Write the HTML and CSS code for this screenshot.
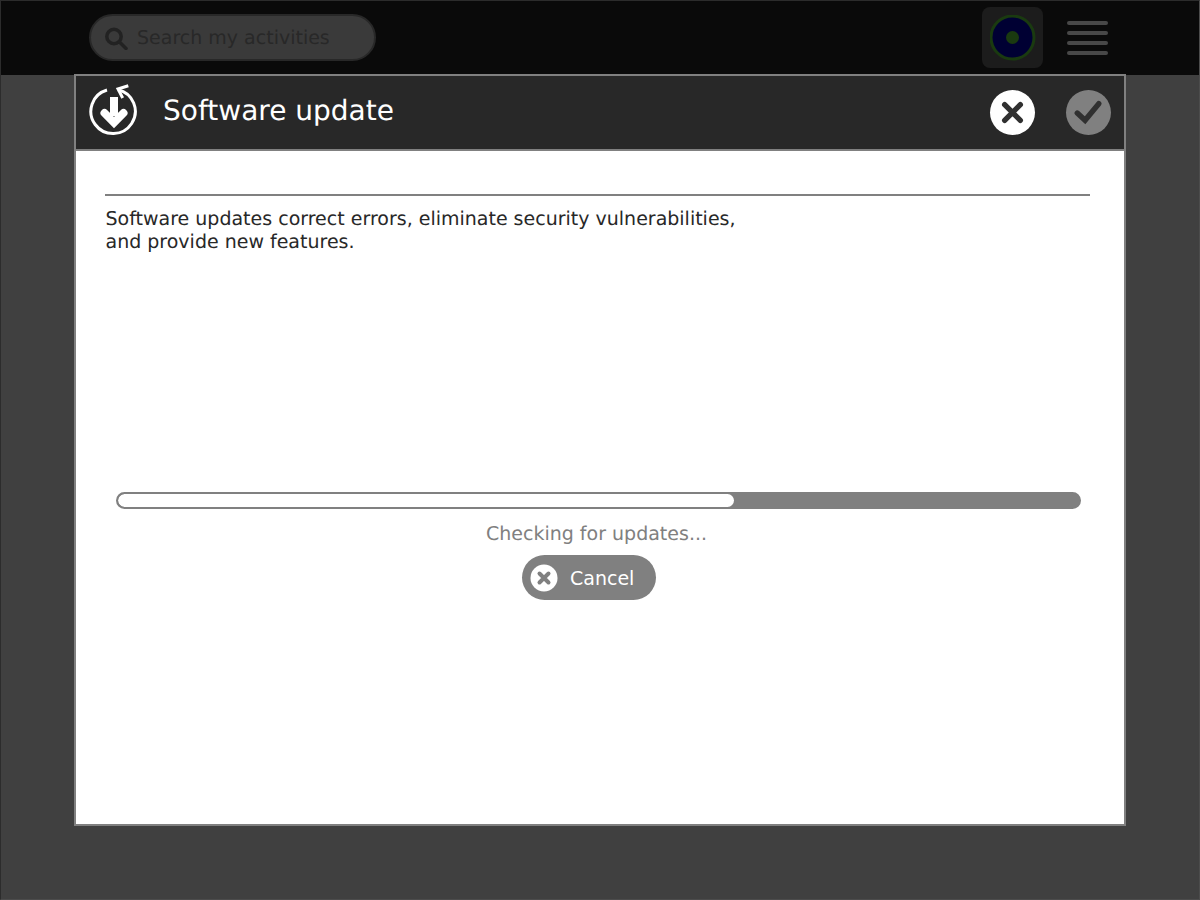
FILE: index.html
```html
<!DOCTYPE html>
<html lang="en">
<head>
<meta charset="utf-8">
<title>Software update</title>
<link rel="stylesheet" href="styles.css">
</head>
<body>
<div class="desktop">
  <header class="toolbar">
    <div class="search">
      <svg class="search-icon" viewBox="0 0 24 24" width="24" height="24"><circle cx="9" cy="10.500" r="7.200"/><path d="M14.500 16 21 22.500"/></svg>
      <span class="search-text">Search my activities</span>
    </div>
    <div class="toolbar-right">
      <div class="buddy">
        <svg viewBox="0 0 46 46" width="46" height="46"><circle class="buddy-ring" cx="22.500" cy="22.500" r="21.5"/><circle class="buddy-dot" cx="22.500" cy="22.500" r="6.5"/></svg>
      </div>
      <div class="menu"><span></span><span></span><span></span><span></span></div>
    </div>
  </header>
</div>
<section class="dialog">
  <div class="dialog-head">
    <svg class="update-icon" viewBox="0 0 50 54" width="50" height="54">
      <path class="ring" d="M18 6A22.200 22.200 0 1 0 29 5.700"/>
      <path class="ring" d="M39.300 1.700 29 5 33.700 14"/>
      <path class="shaft" d="M25 13V32"/>
      <path class="head" d="M15.500 29 25 38.500 34.500 29"/>
    </svg>
    <h1 class="dialog-title">Software update</h1>
    <button class="round-btn round-close" type="button" aria-label="Close">
      <svg viewBox="0 0 46 46" width="45" height="45"><path d="M15 15 31 31M31 15 15 31"/></svg>
    </button>
    <button class="round-btn round-ok" type="button" aria-label="OK">
      <svg viewBox="0 0 46 46" width="45" height="45"><path d="M11.500 23.500 19.500 31 33.500 14"/></svg>
    </button>
  </div>
  <div class="dialog-body">
    <div class="rule"></div>
    <p class="intro">Software updates correct errors, eliminate security vulnerabilities,<br>and provide new features.</p>
    <div class="progress-block">
      <div class="progress"><div class="progress-fill"></div></div>
      <div class="status">Checking for updates...</div>
      <button class="cancel" type="button">
        <svg viewBox="0 0 28 28" width="28" height="28"><circle cx="14" cy="14" r="13.500"/><path d="M9.500 9.500 18.500 18.500M18.500 9.500 9.500 18.500"/></svg>
        <span>Cancel</span>
      </button>
    </div>
  </div>
</section>
</body>
</html>
```
FILE: styles.css
```css
* { box-sizing: border-box; }
html, body { margin: 0; height: 100%; }
body {
  font-family: "DejaVu Sans", sans-serif;
  text-rendering: geometricPrecision;
  background: #404040;
  overflow: hidden;
}
.desktop {
  height: 900px;
  border: 1px solid #2c2c2c;
  border-color: #2c2c2c #4c4c4c #4c4c4c #2c2c2c;
}
.toolbar {
  height: 74px;
  background: #0a0a0a;
  display: flex;
  align-items: center;
  justify-content: space-between;
  padding: 0 91px 1px 88px;
}
.search {
  width: 287px;
  height: 47px;
  border-radius: 24px;
  background: #3a3a3a;
  border: 2px solid #282828;
  display: flex;
  align-items: center;
  padding-left: 14px;
  gap: 8px;
}
.search-icon { fill: none; stroke: #222222; stroke-width: 3.500; stroke-linecap: round; }
.search-text { color: #282828; font-size: 19px; }
.toolbar-right { display: flex; align-items: center; gap: 24px; }
.buddy {
  width: 61px;
  height: 61px;
  border-radius: 8px;
  background: #1c1c1c;
  display: flex;
  align-items: center;
  justify-content: center;
}
.buddy-ring { fill: #000033; stroke: #1a3a10; stroke-width: 3; }
.buddy-dot { fill: #1a3a10; }
.menu { width: 41px; display: flex; flex-direction: column; gap: 6px; }
.menu span { display: block; height: 4px; border-radius: 2px; background: #484848; }
.dialog {
  position: absolute;
  left: 74px;
  top: 74px;
  width: 1052px;
  height: 752px;
  border: 2px solid #808080;
  background: #fff;
  display: flex;
  flex-direction: column;
}
.dialog-head {
  height: 75px;
  flex: none;
  background: #282828;
  border-bottom: 2px solid #808080;
  display: flex;
  align-items: center;
  padding: 0 13px 0 13px;
}
.update-icon { fill: none; stroke: #fff; flex: none; margin-bottom: 3px; }
.ring { stroke-width: 3; fill: none; }
.shaft { stroke-width: 8; }
.head { stroke-width: 8; stroke-linecap: round; stroke-linejoin: miter; }
.dialog-title {
  margin: 0 0 5px 24px;
  flex: 1;
  color: #fff;
  font-size: 28px;
  font-weight: 400;
}
.round-btn {
  width: 45px;
  height: 45px;
  border: 0;
  padding: 0;
  border-radius: 50%;
  display: block;
  flex: none;
}
.round-btn svg { display: block; fill: none; stroke: #303030; stroke-width: 5.500; stroke-linecap: round; }
.round-close { background: #fff; margin-right: 31px; }
.round-ok { background: #808080; }
.dialog-body {
  flex: 1;
  display: flex;
  flex-direction: column;
  padding: 43px 34px 0 29px;
}
.rule { height: 2px; background: #808080; }
.intro {
  margin: 12px 0 0 0.5px;
  color: #282828;
  font-size: 19px;
  line-height: 23px;
}
.progress-block {
  margin-top: 238px;
  padding: 0 9px 0 11px;
  display: flex;
  flex-direction: column;
  align-items: center;
}
.progress {
  width: 100%;
  height: 17px;
  border: 2px solid #808080;
  border-radius: 9px;
  background: #808080;
  overflow: hidden;
}
.progress-fill {
  width: 64.05%;
  height: 100%;
  background: #fff;
  border-radius: 7px;
}
.status {
  margin: 14px 0 0 -4px;
  color: #808080;
  font-size: 19px;
  line-height: 23px;
}
.cancel {
  margin: 9px 0 0 -19px;
  width: 134px;
  height: 45px;
  border: 0;
  border-radius: 23px;
  background: #808080;
  display: flex;
  align-items: center;
  padding: 0 0 0 8px;
  gap: 12px;
  color: #fff;
  font-family: inherit;
  font-size: 19px;
}
.cancel svg circle { fill: #fff; }
.cancel svg path { fill: none; stroke: #808080; stroke-width: 4; stroke-linecap: round; }
```
